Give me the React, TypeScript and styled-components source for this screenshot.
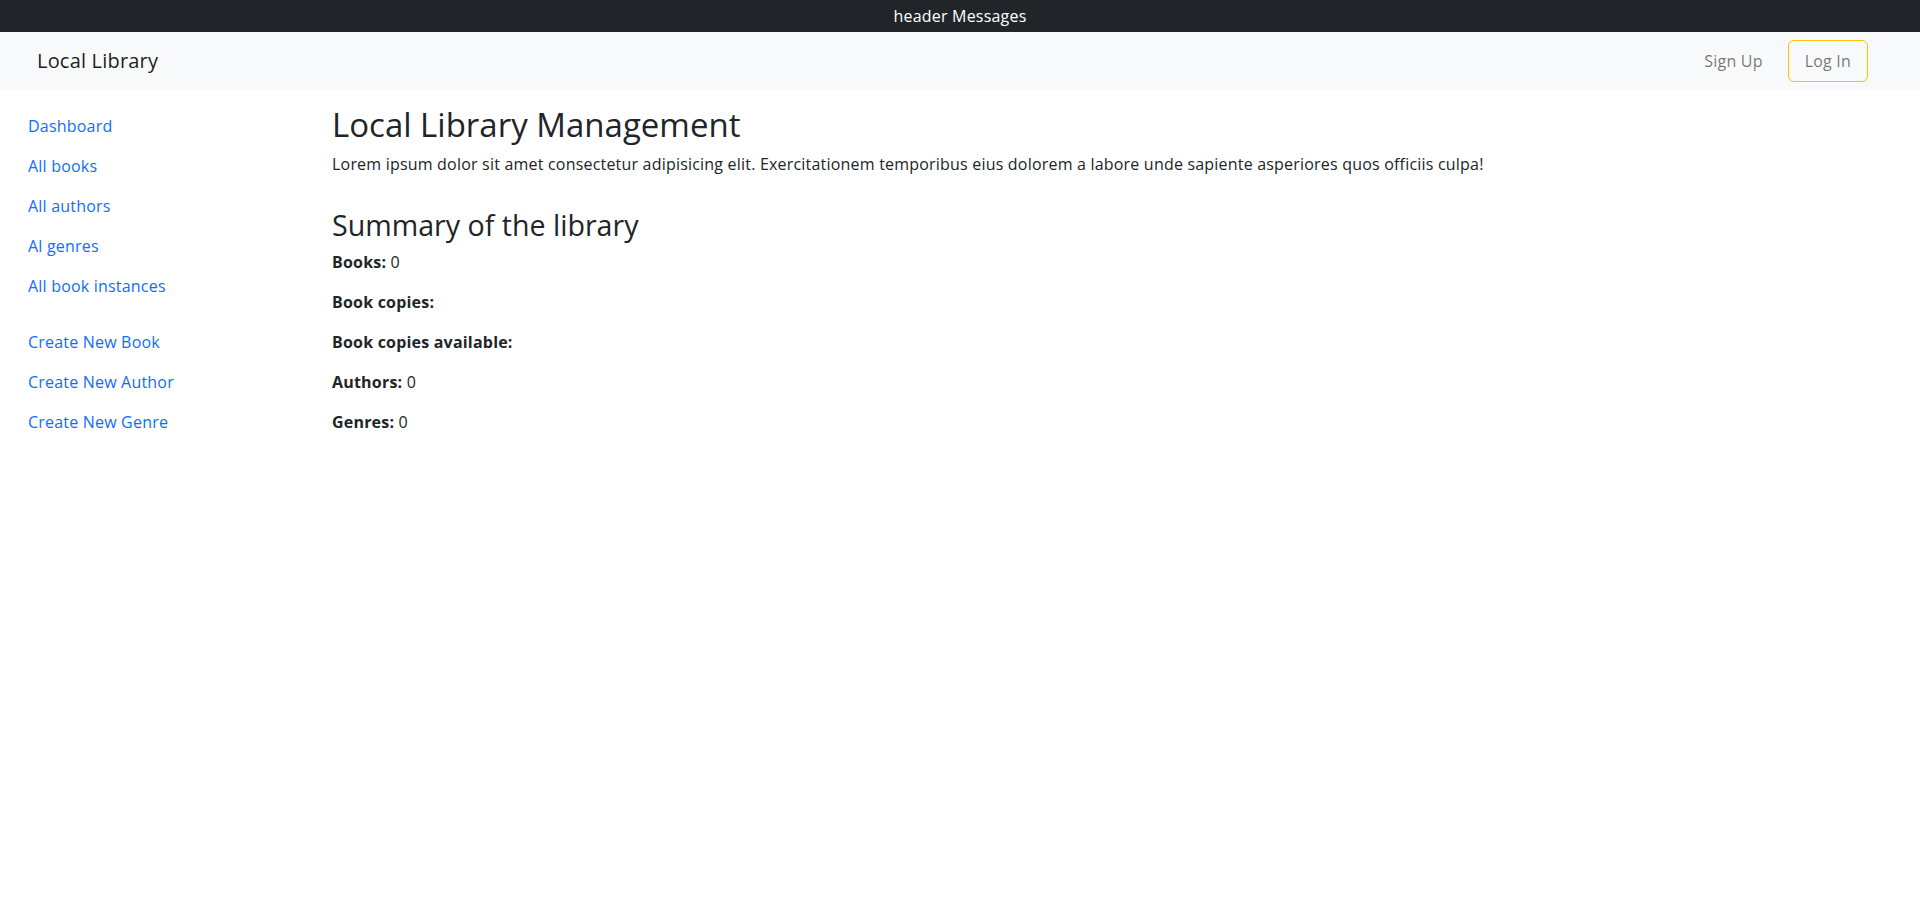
import React from "react";
import styled, { createGlobalStyle } from "styled-components";

const GlobalStyle = createGlobalStyle`
  *, *::before, *::after { box-sizing: border-box; }
  body {
    margin: 0;
    font-family: "Segoe UI", "Open Sans", "Noto Sans", sans-serif;
    font-size: 16px;
    line-height: 1.5;
    letter-spacing: 0.2px;
    color: #212529;
    background: #fff;
  }
`;

const TopBar = styled.div`
  background: #212529;
  color: #fff;
  text-align: center;
  padding: 4px 0;
  line-height: 24px;
`;

const Navbar = styled.nav`
  background: #f8f9fa;
  display: flex;
  align-items: center;
  justify-content: space-between;
  padding: 8px 52px 8px 37px;
`;

const Brand = styled.a`
  font-size: 20px;
  line-height: 30px;
  padding: 5px 0;
  color: rgba(0, 0, 0, 0.9);
  text-decoration: none;
`;

const NavList = styled.div`
  display: flex;
  align-items: center;
  gap: 8px;
`;

const NavLink = styled.a<{ $outlined?: boolean }>`
  display: block;
  padding: 8px 16px;
  line-height: 24px;
  color: rgba(0, 0, 0, 0.55);
  text-decoration: none;
  border: 1px solid ${(p) => (p.$outlined ? "#ffc107" : "transparent")};
  border-radius: 6px;
`;

const Layout = styled.div`
  display: grid;
  grid-template-columns: 320px 1fr;
  margin-top: 16px;
`;

const Sidebar = styled.aside`
  padding: 0 12px;
  display: flex;
  flex-direction: column;
  gap: 16px;
`;

const SideGroup = styled.ul`
  list-style: none;
  margin: 0;
  padding: 0;
  display: flex;
  flex-direction: column;
`;

const SideLink = styled.a`
  display: block;
  padding: 8px 16px;
  line-height: 24px;
  color: #0d6efd;
  text-decoration: none;
`;

const Content = styled.main`
  padding: 0 12px;
`;

const Title = styled.h1`
  font-size: 33px;
  font-weight: 400;
  line-height: 38px;
  letter-spacing: 0;
  margin: 0 0 8px;
`;

const Lead = styled.p`
  margin: 0 0 16px;
`;

const Subtitle = styled.h2`
  font-size: 28.6px;
  font-weight: 400;
  line-height: 34px;
  letter-spacing: 0;
  margin: 32px 0 8px;
`;

const Stat = styled.p`
  margin: 0 0 16px;
  strong { font-weight: 700; }
`;

const browseLinks = ["Dashboard", "All books", "All authors", "Al genres", "All book instances"];
const createLinks = ["Create New Book", "Create New Author", "Create New Genre"];

const stats: { label: string; value: string }[] = [
  { label: "Books:", value: "0" },
  { label: "Book copies:", value: "" },
  { label: "Book copies available:", value: "" },
  { label: "Authors:", value: "0" },
  { label: "Genres:", value: "0" },
];

export default function App() {
  return (
    <>
      <GlobalStyle />
      <TopBar>header Messages</TopBar>
      <Navbar>
        <Brand href="#">Local Library</Brand>
        <NavList>
          <NavLink href="#">Sign Up</NavLink>
          <NavLink href="#" $outlined>Log In</NavLink>
        </NavList>
      </Navbar>
      <Layout>
        <Sidebar>
          <SideGroup>
            {browseLinks.map((l) => (
              <li key={l}><SideLink href="#">{l}</SideLink></li>
            ))}
          </SideGroup>
          <SideGroup>
            {createLinks.map((l) => (
              <li key={l}><SideLink href="#">{l}</SideLink></li>
            ))}
          </SideGroup>
        </Sidebar>
        <Content>
          <Title>Local Library Management</Title>
          <Lead>
            Lorem ipsum dolor sit amet consectetur adipisicing elit. Exercitationem temporibus eius dolorem a labore unde sapiente asperiores quos officiis culpa!
          </Lead>
          <Subtitle>Summary of the library</Subtitle>
          {stats.map((s) => (
            <Stat key={s.label}>
              <strong>{s.label}</strong>{s.value ? ` ${s.value}` : ""}
            </Stat>
          ))}
        </Content>
      </Layout>
    </>
  );
}
